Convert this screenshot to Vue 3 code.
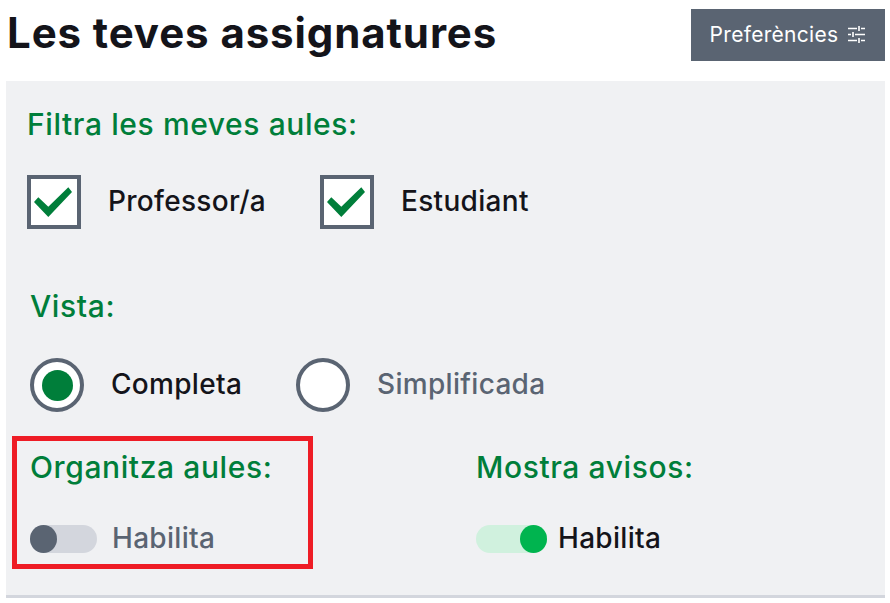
<script setup>
import { ref } from 'vue'

const filters = ref([
  { id: 'teacher', label: 'Professor/a', checked: true },
  { id: 'student', label: 'Estudiant', checked: true },
])
const view = ref('full')
const organize = ref(false)
const notices = ref(true)
</script>

<template>
  <div class="page">
    <header class="top">
      <h1>Les teves assignatures</h1>
      <button class="prefs">
        Preferències
        <svg width="18" height="18" viewBox="0 0 18 18" fill="none" stroke="currentColor" stroke-width="1.6">
          <path d="M0 3.5h9M13 3.5h4M11 1v5M0 9.5h3M7 9.5h10M5 7v5M0 15.5h9M13 15.5h4M11 13v5" />
        </svg>
      </button>
    </header>

    <section class="panel">
      <h2 class="filter-title">Filtra les meves aules:</h2>
      <div class="filters">
        <label v-for="f in filters" :key="f.id" class="filter" @click.prevent="f.checked = !f.checked">
          <span class="check">
            <svg v-if="f.checked" width="46" height="46" viewBox="0 0 46 46">
              <polygon points="3,23 7.3,18.3 17.3,27.7 37.3,8.3 41,13 17.3,38" fill="#007e3a" />
            </svg>
          </span>
          <span class="opt-text">{{ f.label }}</span>
        </label>
      </div>

      <h2 class="view-title">Vista:</h2>
      <div class="views">
        <label class="view" @click.prevent="view = 'full'">
          <span class="radio"><span v-if="view === 'full'" class="dot"></span></span>
          <span class="opt-text" :class="{ muted: view !== 'full' }">Completa</span>
        </label>
        <label class="view" @click.prevent="view = 'simple'">
          <span class="radio"><span v-if="view === 'simple'" class="dot"></span></span>
          <span class="opt-text" :class="{ muted: view !== 'simple' }">Simplificada</span>
        </label>
      </div>

      <div class="switches">
        <div class="organize">
          <h2>Organitza aules:</h2>
          <div class="switch-row">
            <button class="toggle" :class="{ on: organize }" @click="organize = !organize"><span></span></button>
            <span class="opt-text" :class="{ muted: !organize }">Habilita</span>
          </div>
        </div>
        <div class="notices">
          <h2>Mostra avisos:</h2>
          <div class="switch-row">
            <button class="toggle wide" :class="{ on: notices }" @click="notices = !notices"><span></span></button>
            <span class="opt-text" :class="{ muted: !notices }">Habilita</span>
          </div>
        </div>
      </div>
    </section>
  </div>
</template>

<style>
html,
body {
  margin: 0;
  background: #fff;
}
</style>

<style scoped>
.page {
  width: 879px;
  margin-left: 6px;
  font-family: Inter, 'Liberation Sans', sans-serif;
}

.top {
  height: 81px;
  box-sizing: border-box;
  padding-top: 9px;
  display: flex;
  justify-content: space-between;
  align-items: flex-start;
}

h1 {
  margin: 0 0 0 1px;
  height: 48px;
  line-height: 48px;
  font-size: 42px;
  letter-spacing: 0.9px;
  font-weight: 700;
  color: #14141a;
}

.prefs {
  width: 194px;
  height: 52px;
  padding: 0 0 2px;
  border: none;
  background: #5a6472;
  color: #fff;
  font: 400 21px Inter, sans-serif;
  letter-spacing: 0.3px;
  display: flex;
  align-items: center;
  justify-content: center;
  gap: 10px;
}

.panel {
  height: 517px;
  box-sizing: border-box;
  background: #f0f1f3;
  border-bottom: 3px solid #d3d6dd;
  padding: 25px 0 0 24px;
}

h2 {
  margin: 0;
  height: 36px;
  line-height: 36px;
  font-size: 30px;
  letter-spacing: 0.6px;
  font-weight: 500;
  color: #007e3a;
}

.filter-title {
  margin-left: -3px;
}

.filters {
  display: flex;
  gap: 54px;
  margin: 33px 0 0 -3px;
}

.filter,
.view {
  display: flex;
  align-items: center;
}

.check {
  width: 54px;
  height: 54px;
  box-sizing: border-box;
  border: 4px solid #5a6472;
  background: #fff;
  display: flex;
  margin-right: 27px;
}

.opt-text {
  margin-top: -2px;
  font-size: 28px;
  letter-spacing: 0.3px;
  font-weight: 500;
  color: #14141a;
}

.opt-text.muted {
  color: #5a6472;
}

.view-title {
  margin-top: 59px;
}

.views {
  display: flex;
  gap: 54px;
  margin-top: 34px;
}

.radio {
  width: 54px;
  height: 54px;
  box-sizing: border-box;
  border: 4px solid #5a6472;
  border-radius: 50%;
  background: #fff;
  display: flex;
  align-items: center;
  justify-content: center;
  margin-right: 27px;
}

.dot {
  width: 31px;
  height: 31px;
  border-radius: 50%;
  background: #007e3a;
}

.switches {
  display: flex;
  margin: 24px 0 0 -18px;
}

.organize {
  width: 301px;
  height: 133px;
  box-sizing: border-box;
  border: 5px solid #ee1c25;
  padding: 8px 0 0 13px;
}

.notices {
  margin-left: 163px;
  padding-top: 13px;
}

.switch-row {
  display: flex;
  align-items: center;
  margin-top: 38px;
}

.toggle {
  width: 67px;
  height: 28px;
  padding: 0;
  border: none;
  border-radius: 14px;
  background: #d3d6dd;
  display: flex;
  margin-right: 15px;
}

.toggle span {
  width: 27px;
  height: 28px;
  border-radius: 50%;
  background: #5a6472;
}

.toggle.on {
  background: #d0f1de;
  justify-content: flex-end;
}

.toggle.on span {
  background: #00b44f;
}

.toggle.wide {
  width: 71px;
  margin-right: 11px;
}
</style>
